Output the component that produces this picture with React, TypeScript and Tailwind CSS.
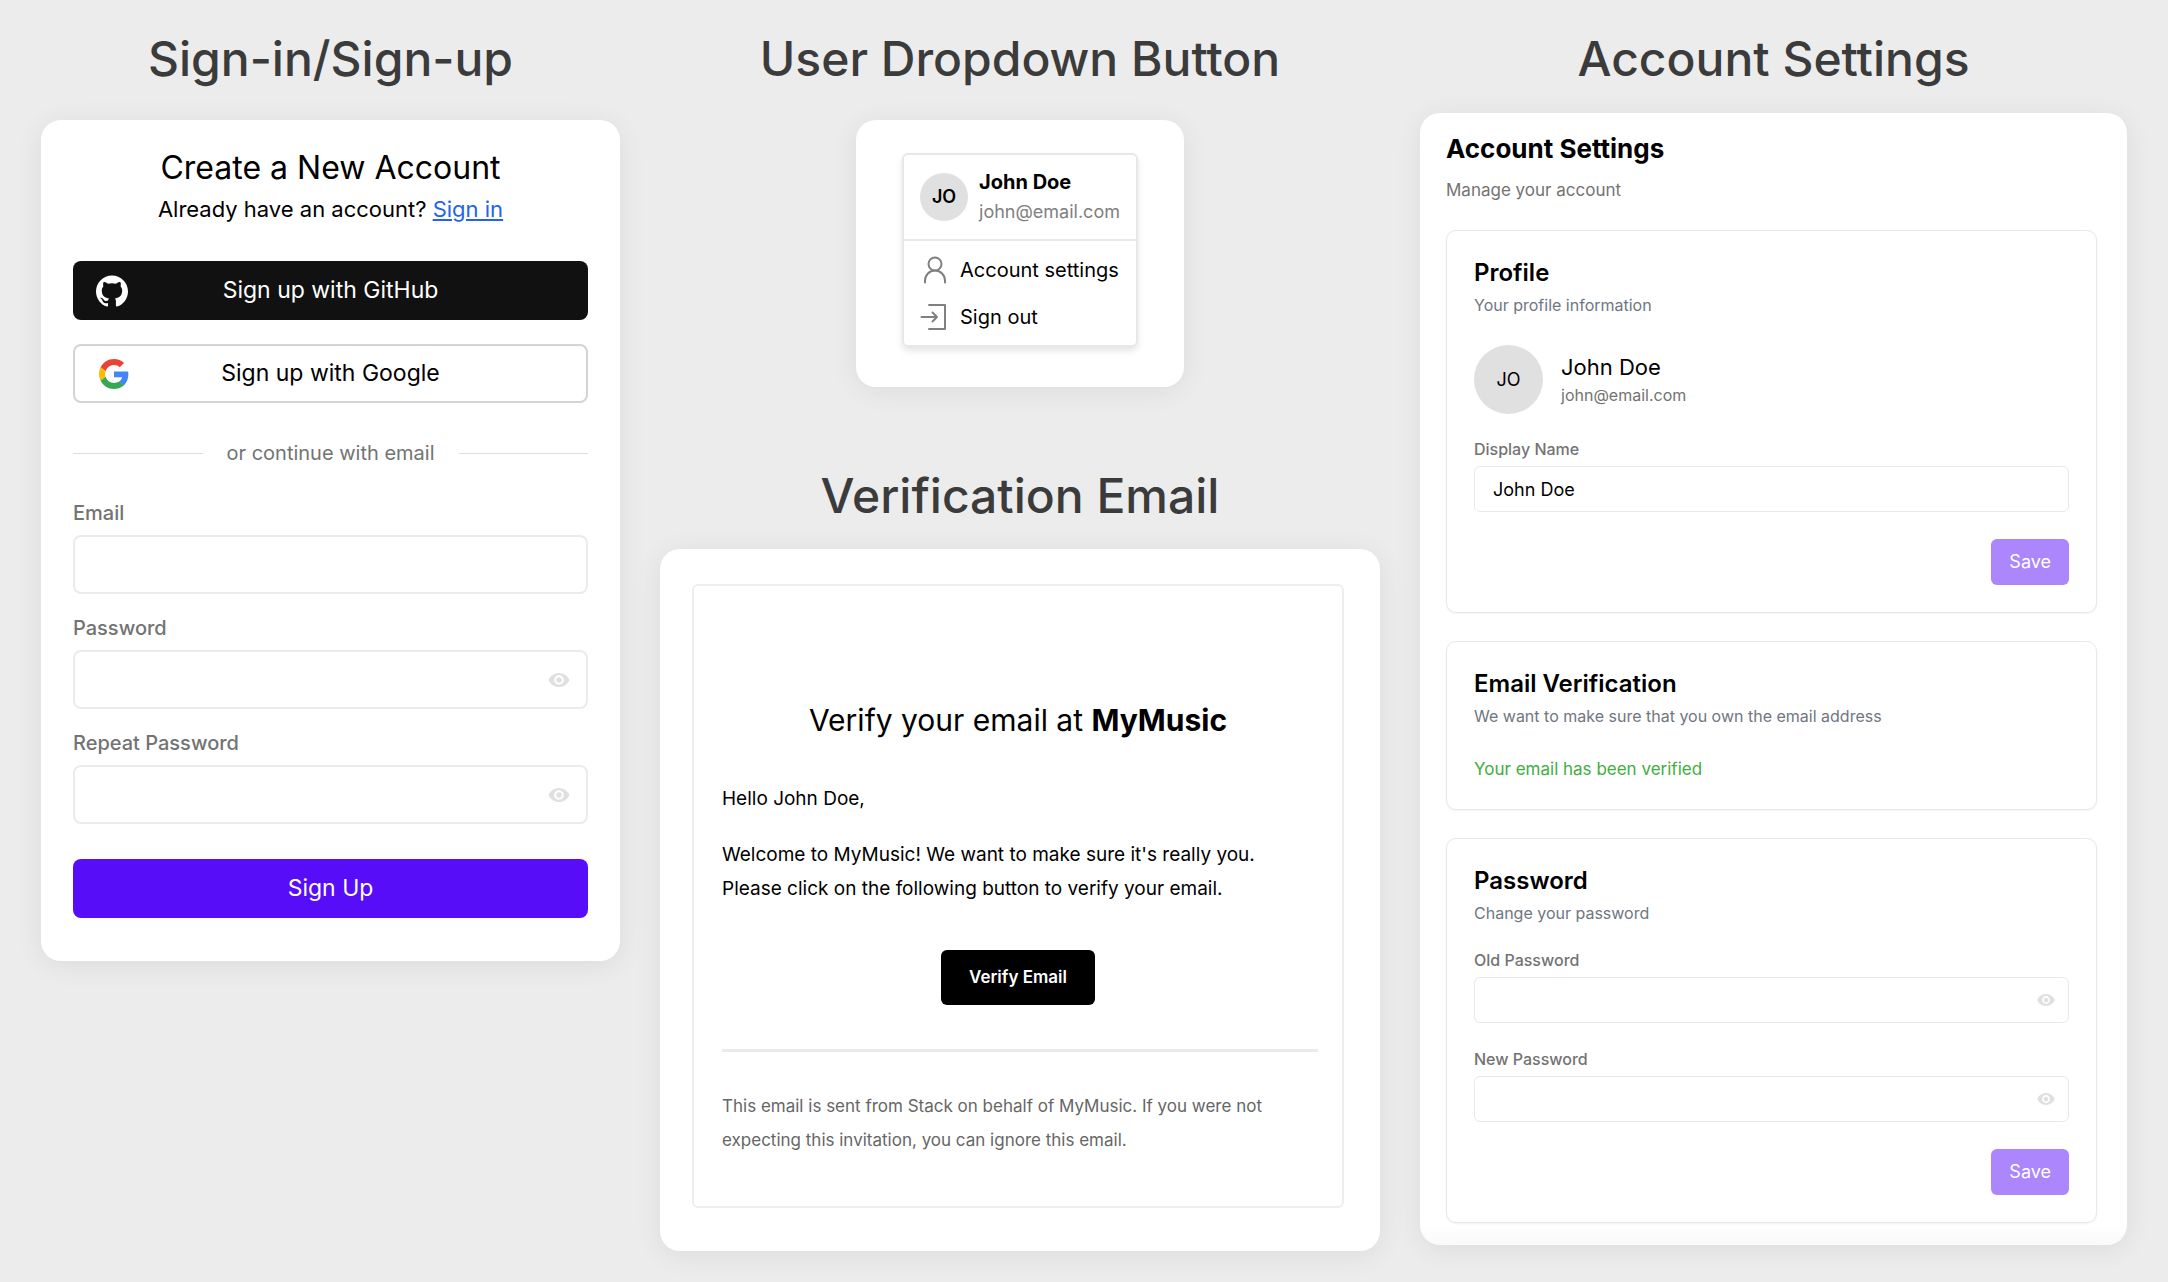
import { useId, useState, type ReactNode } from "react";
import { IoMdEye } from "react-icons/io";
import { SiGithub } from "react-icons/si";

const cardClass =
  "rounded-[20px] bg-white shadow-[0_4px_28px_rgba(0,0,0,0.07)]";

function SectionHeading({ children }: { children: ReactNode }) {
  return (
    <h2 className="text-center text-[48px] leading-[58px] font-medium text-[#3b3b3b]">
      {children}
    </h2>
  );
}

function GoogleLogo({ className }: { className: string }) {
  return (
    <svg aria-hidden="true" viewBox="0 0 48 48" className={className}>
      <path
        fill="#EA4335"
        d="M24 9.500c3.540 0 6.710 1.220 9.210 3.600l6.850-6.850C35.900 2.380 30.470 0 24 0 14.620 0 6.510 5.380 2.560 13.220l7.980 6.190C12.430 13.720 17.740 9.500 24 9.500z"
      />
      <path
        fill="#4285F4"
        d="M46.980 24.550c0-1.570-.15-3.090-.38-4.550H24v9.020h12.940c-.58 2.960-2.260 5.480-4.780 7.180l7.730 6c4.510-4.180 7.090-10.360 7.090-17.650z"
      />
      <path
        fill="#FBBC05"
        d="M10.530 28.590c-.48-1.450-.76-2.990-.76-4.590s.27-3.140.76-4.590l-7.980-6.190C.92 16.460 0 20.120 0 24c0 3.880.92 7.540 2.560 10.780l7.970-6.190z"
      />
      <path
        fill="#34A853"
        d="M24 48c6.480 0 11.930-2.130 15.890-5.810l-7.730-6c-2.150 1.450-4.920 2.300-8.160 2.300-6.260 0-11.570-4.220-13.470-9.910l-7.980 6.190C6.510 42.620 14.620 48 24 48z"
      />
    </svg>
  );
}

function PersonIcon() {
  return (
    <svg
      aria-hidden="true"
      viewBox="0 0 26 28"
      className="h-7 w-[26px] shrink-0"
      fill="none"
      stroke="#808080"
      strokeWidth="2"
      strokeLinecap="round"
    >
      <circle cx="15" cy="8" r="6.5" />
      <path d="M5 26.500v-2a10 10 0 0 1 20 0v2" />
    </svg>
  );
}

function SignOutIcon() {
  return (
    <svg
      aria-hidden="true"
      viewBox="0 0 26 28"
      className="h-7 w-[26px] shrink-0"
      fill="none"
      stroke="#808080"
      strokeWidth="2"
      strokeLinecap="round"
      strokeLinejoin="round"
    >
      <path d="M9 2h16v24H9" />
      <path d="M1.500 14H17M12.500 9.500l4.500 4.500l-4.500 4.500" />
    </svg>
  );
}

type FieldProps = {
  label: string;
  type?: string;
  size: "lg" | "sm";
  defaultValue?: string;
};

function Field({ label, type = "text", size, defaultValue }: FieldProps) {
  const id = useId();
  const [visible, setVisible] = useState(false);
  const large = size === "lg";
  const isPassword = type === "password";
  return (
    <div className={large ? "flex flex-col gap-2.5" : "flex flex-col gap-1.5"}>
      <label
        htmlFor={id}
        className={
          large
            ? "text-xl leading-6 font-medium text-[#737373]"
            : "text-base leading-[22px] font-medium text-[#737373]"
        }
      >
        {label}
      </label>
      <div className="relative">
        <input
          id={id}
          type={isPassword && visible ? "text" : type}
          defaultValue={defaultValue}
          className={
            large
              ? "block h-[59px] w-full rounded-lg border-2 border-[#ebebeb] bg-white px-5 text-xl text-black"
              : "block h-[46px] w-full rounded-md border border-[#e8e8e8] bg-white px-[18px] text-lg text-black"
          }
        />
        {isPassword && (
          <button
            type="button"
            aria-label="Toggle password visibility"
            onClick={() => setVisible(!visible)}
            className={
              large
                ? "absolute inset-y-0 right-[17px] flex items-center text-2xl text-[#e0e0e0]"
                : "absolute inset-y-0 right-[13px] flex items-center text-xl text-[#e0e0e0]"
            }
          >
            <IoMdEye />
          </button>
        )}
      </div>
    </div>
  );
}

function SignUpCard() {
  return (
    <div className={`${cardClass} px-8 pt-7 pb-[43px]`}>
      <h3 className="text-center text-[32px] leading-10 text-black">
        Create a New Account
      </h3>
      <p className="mt-[5px] text-center text-[22px] leading-8 text-black">
        Already have an account?{" "}
        <a href="#signin" className="text-[#2563eb] underline">
          Sign in
        </a>
      </p>
      <div className="mt-9 flex flex-col gap-6">
        <button
          type="button"
          className="relative h-[59px] rounded-lg bg-[#111111] text-[23px] text-white"
        >
          <SiGithub className="absolute top-3.5 left-[23px] size-8" />
          Sign up with GitHub
        </button>
        <button
          type="button"
          className="relative h-[59px] rounded-lg border-2 border-[#d4d4d4] bg-white text-[23px] text-black"
        >
          <GoogleLogo className="absolute top-[13px] left-6 size-[30px]" />
          Sign up with Google
        </button>
      </div>
      <div className="mt-9 flex items-center gap-6 text-xl leading-7 text-[#737373]">
        <span className="h-px flex-1 bg-[#dedede]" />
        or continue with email
        <span className="h-px flex-1 bg-[#dedede]" />
      </div>
      <form
        className="mt-[34px] flex flex-col gap-[22px]"
        onSubmit={(e) => e.preventDefault()}
      >
        <Field label="Email" type="email" size="lg" />
        <Field label="Password" type="password" size="lg" />
        <Field label="Repeat Password" type="password" size="lg" />
        <button
          type="submit"
          className="mt-[13px] h-[59px] rounded-lg bg-[#570df8] text-[23px] text-white"
        >
          Sign Up
        </button>
      </form>
    </div>
  );
}

function UserMenuCard() {
  return (
    <div className={`${cardClass} w-fit px-[46px] pt-[33px] pb-10`}>
      <div className="rounded-md border-2 border-[#e8e8e8] shadow-[0_4px_6px_rgba(0,0,0,0.1)]">
        <div className="flex items-center gap-[11px] border-b-2 border-[#e8e8e8] px-4 py-[13px]">
          <span className="flex size-12 shrink-0 items-center justify-center rounded-full bg-[#e0e0e0] text-lg font-semibold text-black">
            JO
          </span>
          <div>
            <p className="text-xl leading-[29px] font-bold text-black">
              John Doe
            </p>
            <p className="text-lg leading-[29px] text-[#808080]">
              john@email.com
            </p>
          </div>
        </div>
        <div className="flex flex-col py-[5px]">
          <button
            type="button"
            className="flex h-[47px] items-center gap-3.5 px-4 text-xl whitespace-nowrap text-black"
          >
            <PersonIcon />
            Account settings
          </button>
          <button
            type="button"
            className="flex h-[47px] items-center gap-3.5 px-4 text-xl whitespace-nowrap text-black"
          >
            <SignOutIcon />
            Sign out
          </button>
        </div>
      </div>
    </div>
  );
}

function VerificationCard() {
  return (
    <div className={`${cardClass} w-full pt-[35px] pr-9 pb-[43px] pl-8`}>
      <div className="rounded-md border-2 border-[#eeeeee] px-7 pt-[114px] pb-[49px] text-black">
        <h3 className="text-center text-[30px] leading-10">
          Verify your email at <strong className="font-bold">MyMusic</strong>
        </h3>
        <p className="mt-[42px] text-[19px] leading-[34px]">Hello John Doe,</p>
        <p className="mt-[22px] text-[19px] leading-[34px]">
          Welcome to MyMusic! We want to make sure it's really you.
          <br />
          Please click on the following button to verify your email.
        </p>
        <div className="mt-11 flex justify-center">
          <button
            type="button"
            className="h-[55px] rounded-md bg-black px-7 text-[17px] font-semibold text-white"
          >
            Verify Email
          </button>
        </div>
        <hr className="mt-11 -mr-1 border-t-[3px] border-[#eaeaea]" />
        <p className="mt-[37px] text-[17px] leading-[34px] text-[#666666]">
          This email is sent from Stack on behalf of MyMusic. If you were not
          <br />
          expecting this invitation, you can ignore this email.
        </p>
      </div>
    </div>
  );
}

function SettingsPanel({
  title,
  description,
  children,
}: {
  title: string;
  description: string;
  children: ReactNode;
}) {
  return (
    <section className="rounded-[10px] border border-[#e8e8e8] bg-white px-[27px] pt-[25px] pb-[27px] shadow-[0_1px_2px_rgba(0,0,0,0.05)]">
      <h4 className="text-2xl leading-[34px] font-semibold text-black">
        {title}
      </h4>
      <p className="mt-[3px] text-base leading-6 text-[#6f7681]">
        {description}
      </p>
      {children}
    </section>
  );
}

function SaveButton() {
  return (
    <div className="mt-[27px] flex justify-end">
      <button
        type="submit"
        className="h-[46px] rounded-md bg-[#ab86fc] px-[18px] text-lg text-white"
      >
        Save
      </button>
    </div>
  );
}

function AccountSettingsCard() {
  return (
    <div
      className={`${cardClass} bg-linear-to-b from-white from-98% to-[#fafafa] pt-[19px] pr-[30px] pb-[22px] pl-[26px]`}
    >
      <h3 className="text-[26px] leading-[34px] font-bold text-black">
        Account Settings
      </h3>
      <p className="mt-2.5 text-[17px] leading-7 text-[#737373]">
        Manage your account
      </p>
      <div className="mt-[26px] flex flex-col gap-7">
        <SettingsPanel title="Profile" description="Your profile information">
          <div className="mt-7 flex items-center gap-[18px]">
            <span className="flex size-[69px] items-center justify-center rounded-full bg-[#e0e0e0] text-lg text-black">
              JO
            </span>
            <div>
              <p className="text-[22px] leading-7 text-black">John Doe</p>
              <p className="mt-[3px] text-base leading-[22px] text-[#737373]">
                john@email.com
              </p>
            </div>
          </div>
          <form className="mt-6" onSubmit={(e) => e.preventDefault()}>
            <Field label="Display Name" size="sm" defaultValue="John Doe" />
            <SaveButton />
          </form>
        </SettingsPanel>
        <SettingsPanel
          title="Email Verification"
          description="We want to make sure that you own the email address"
        >
          <p className="mt-7 text-[17px] leading-[26px] text-[#3fae3f]">
            Your email has been verified
          </p>
        </SettingsPanel>
        <SettingsPanel title="Password" description="Change your password">
          <form className="mt-6" onSubmit={(e) => e.preventDefault()}>
            <div className="flex flex-col gap-[25px]">
              <Field label="Old Password" type="password" size="sm" />
              <Field label="New Password" type="password" size="sm" />
            </div>
            <SaveButton />
          </form>
        </SettingsPanel>
      </div>
    </div>
  );
}

export default function App() {
  return (
    <main className="grid min-h-screen grid-cols-[579fr_720fr_707fr] items-start gap-10 bg-[#ececec] px-[41px] pt-[30px] font-['Inter',sans-serif]">
      <div className="flex flex-col gap-8">
        <SectionHeading>Sign-in/Sign-up</SectionHeading>
        <SignUpCard />
      </div>
      <div className="flex flex-col gap-20">
        <div className="flex flex-col items-center gap-8">
          <SectionHeading>User Dropdown Button</SectionHeading>
          <UserMenuCard />
        </div>
        <div className="flex flex-col items-center gap-6">
          <SectionHeading>Verification Email</SectionHeading>
          <VerificationCard />
        </div>
      </div>
      <div className="flex flex-col gap-[25px]">
        <SectionHeading>Account Settings</SectionHeading>
        <AccountSettingsCard />
      </div>
    </main>
  );
}
